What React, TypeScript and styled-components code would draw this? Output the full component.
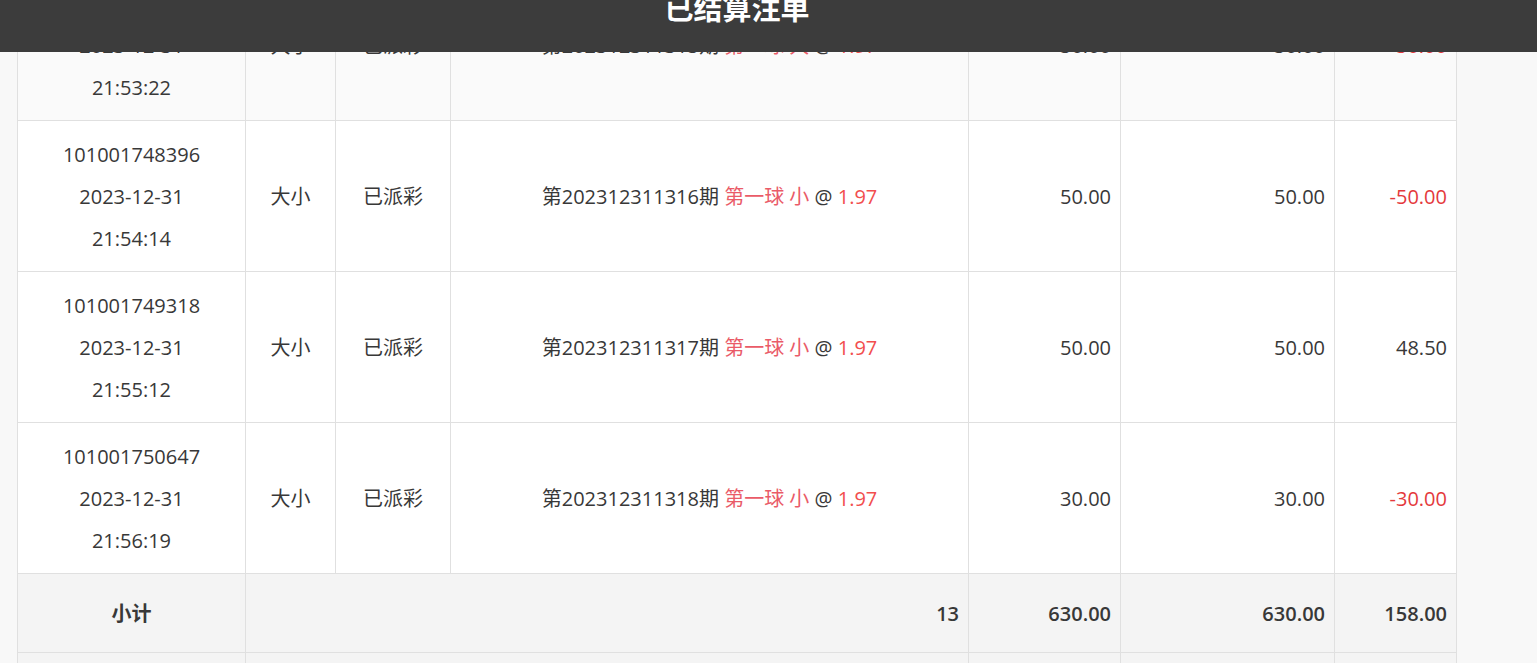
import React from "react";
import styled, { createGlobalStyle } from "styled-components";

const GlobalStyle = createGlobalStyle`
  html, body {
    margin: 0;
    padding: 0;
    overflow: hidden;
    background: #f8f8f8;
  }
  body {
    font-family: "Open Sans", "Noto Sans CJK SC", sans-serif;
    color: #383838;
  }
`;

const Header = styled.header`
  position: fixed;
  top: 0;
  left: 0;
  right: 0;
  height: 52px;
  background: #3c3c3c;
  display: flex;
  justify-content: center;
  align-items: flex-start;
  padding-right: 63px;
  overflow: hidden;
  z-index: 10;
`;

const Title = styled.h1`
  margin: -7px 0 0 0;
  font-family: "Noto Sans CJK SC", sans-serif;
  font-size: 29px;
  line-height: 29px;
  font-weight: 700;
  color: #fff;
`;

const Content = styled.main`
  padding-left: 17px;
  margin-top: -31px;
`;

const Table = styled.table`
  width: 1440px;
  table-layout: fixed;
  border-collapse: collapse;
  font-size: 20px;
  background: #fff;
`;

const Row = styled.tr<{ $shade?: string }>`
  background: ${(p) => p.$shade || "#fff"};
`;

const Cell = styled.td<{ $align?: "left" | "center" | "right"; $bold?: boolean; $tall?: boolean }>`
  border: 1px solid #e0e0e0;
  padding: ${(p) => (p.$tall ? "13px 9px 11px" : "19px 9px 17px")};
  line-height: 42px;
  text-align: ${(p) => p.$align || "center"};
  vertical-align: middle;
  font-weight: ${(p) => (p.$bold ? 600 : 400)};
  white-space: nowrap;
`;

const Line = styled.div`
  line-height: 42px;
`;

const Pick = styled.span`
  color: #ea5b68;
`;

const Odds = styled.span`
  color: #f24e4e;
`;

const Amount = styled.span<{ $loss?: boolean }>`
  color: ${(p) => (p.$loss ? "#e4393c" : "#383838")};
`;

type Bet = {
  id: string;
  date: string;
  time: string;
  play: string;
  status: string;
  issue: string;
  pick: string;
  odds: string;
  stake: string;
  valid: string;
  result: string;
  shade?: string;
};

const bets: Bet[] = [
  {
    id: "101001747512",
    date: "2023-12-31",
    time: "21:53:22",
    play: "大小",
    status: "已派彩",
    issue: "第202312311315期",
    pick: "第一球 大",
    odds: "1.97",
    stake: "50.00",
    valid: "50.00",
    result: "-50.00",
    shade: "#fafafa",
  },
  {
    id: "101001748396",
    date: "2023-12-31",
    time: "21:54:14",
    play: "大小",
    status: "已派彩",
    issue: "第202312311316期",
    pick: "第一球 小",
    odds: "1.97",
    stake: "50.00",
    valid: "50.00",
    result: "-50.00",
  },
  {
    id: "101001749318",
    date: "2023-12-31",
    time: "21:55:12",
    play: "大小",
    status: "已派彩",
    issue: "第202312311317期",
    pick: "第一球 小",
    odds: "1.97",
    stake: "50.00",
    valid: "50.00",
    result: "48.50",
  },
  {
    id: "101001750647",
    date: "2023-12-31",
    time: "21:56:19",
    play: "大小",
    status: "已派彩",
    issue: "第202312311318期",
    pick: "第一球 小",
    odds: "1.97",
    stake: "30.00",
    valid: "30.00",
    result: "-30.00",
  },
];

export default function App() {
  return (
    <>
      <GlobalStyle />
      <Header>
        <Title>已结算注单</Title>
      </Header>
      <Content>
        <Table>
          <colgroup>
            <col style={{ width: 228 }} />
            <col style={{ width: 90 }} />
            <col style={{ width: 115 }} />
            <col style={{ width: 518 }} />
            <col style={{ width: 152 }} />
            <col style={{ width: 214 }} />
            <col style={{ width: 122 }} />
          </colgroup>
          <tbody>
            {bets.map((b) => (
              <Row key={b.id} $shade={b.shade}>
                <Cell $tall>
                  <Line>{b.id}</Line>
                  <Line>{b.date}</Line>
                  <Line>{b.time}</Line>
                </Cell>
                <Cell $tall>{b.play}</Cell>
                <Cell $tall>{b.status}</Cell>
                <Cell $tall>
                  {b.issue} <Pick>{b.pick}</Pick> @ <Odds>{b.odds}</Odds>
                </Cell>
                <Cell $tall $align="right">{b.stake}</Cell>
                <Cell $tall $align="right">{b.valid}</Cell>
                <Cell $tall $align="right">
                  <Amount $loss={b.result.startsWith("-")}>{b.result}</Amount>
                </Cell>
              </Row>
            ))}
            <Row $shade="#f4f4f4">
              <Cell $bold>小计</Cell>
              <Cell $bold $align="right" colSpan={3}>13</Cell>
              <Cell $bold $align="right">630.00</Cell>
              <Cell $bold $align="right">630.00</Cell>
              <Cell $bold $align="right">158.00</Cell>
            </Row>
            <Row $shade="#f4f4f4">
              <Cell $bold>总计</Cell>
              <Cell $bold $align="right" colSpan={3}>13</Cell>
              <Cell $bold $align="right">630.00</Cell>
              <Cell $bold $align="right">630.00</Cell>
              <Cell $bold $align="right">158.00</Cell>
            </Row>
          </tbody>
        </Table>
      </Content>
    </>
  );
}
